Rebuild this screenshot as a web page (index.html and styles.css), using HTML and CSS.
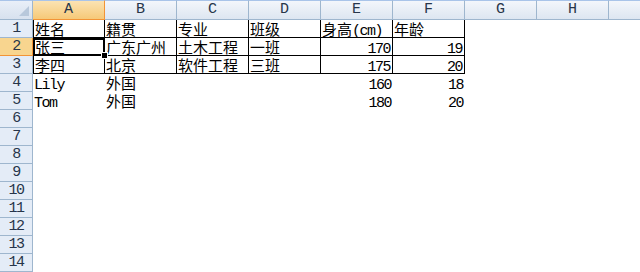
FILE: index.html
```html
<!DOCTYPE html>
<html lang="zh-CN">
  <head>
    <meta charset="UTF-8" />
    <title>Sheet1</title>
    <link rel="stylesheet" href="styles.css">
  </head>
  <body>
    <div class="sheet">
      <div class="corner"></div>
      <div class="colhead sel">A</div>
      <div class="colhead">B</div>
      <div class="colhead">C</div>
      <div class="colhead">D</div>
      <div class="colhead">E</div>
      <div class="colhead">F</div>
      <div class="colhead">G</div>
      <div class="colhead">H</div>
      <div class="colhead rest"></div>

      <div class="rowhead">1</div>
      <div class="cell b first">姓名</div>
      <div class="cell b">籍贯</div>
      <div class="cell b">专业</div>
      <div class="cell b">班级</div>
      <div class="cell b">身高<span class="latin">(cm)</span></div>
      <div class="cell b">年龄</div>
      <div class="cell"></div><div class="cell"></div><div class="cell"></div>

      <div class="rowhead sel">2</div>
      <div class="cell b first active">张三<span class="handle"></span></div>
      <div class="cell b">广东广州</div>
      <div class="cell b">土木工程</div>
      <div class="cell b">一班</div>
      <div class="cell b num"><span class="latin">170</span></div>
      <div class="cell b num"><span class="latin">19</span></div>
      <div class="cell"></div><div class="cell"></div><div class="cell"></div>

      <div class="rowhead">3</div>
      <div class="cell b first">李四</div>
      <div class="cell b">北京</div>
      <div class="cell b">软件工程</div>
      <div class="cell b">三班</div>
      <div class="cell b num"><span class="latin">175</span></div>
      <div class="cell b num"><span class="latin">20</span></div>
      <div class="cell"></div><div class="cell"></div><div class="cell"></div>

      <div class="rowhead">4</div>
      <div class="cell"><span class="latin">Lily</span></div>
      <div class="cell">外国</div>
      <div class="cell"></div>
      <div class="cell"></div>
      <div class="cell num"><span class="latin">160</span></div>
      <div class="cell num"><span class="latin">18</span></div>
      <div class="cell"></div><div class="cell"></div><div class="cell"></div>

      <div class="rowhead">5</div>
      <div class="cell"><span class="latin">Tom</span></div>
      <div class="cell">外国</div>
      <div class="cell"></div>
      <div class="cell"></div>
      <div class="cell num"><span class="latin">180</span></div>
      <div class="cell num"><span class="latin">20</span></div>
      <div class="cell"></div><div class="cell"></div><div class="cell"></div>

      <div class="rowhead">6</div><div class="blank"></div>
      <div class="rowhead">7</div><div class="blank"></div>
      <div class="rowhead">8</div><div class="blank"></div>
      <div class="rowhead">9</div><div class="blank"></div>
      <div class="rowhead">10</div><div class="blank"></div>
      <div class="rowhead">11</div><div class="blank"></div>
      <div class="rowhead">12</div><div class="blank"></div>
      <div class="rowhead">13</div><div class="blank"></div>
      <div class="rowhead">14</div><div class="blank"></div>
    </div>
  </body>
</html>
```

FILE: styles.css
```css
body {
  margin: 0;
  background: #ffffff;
  font-family: "Noto Sans CJK SC", sans-serif;
  overflow: hidden;
}
.sheet {
  display: grid;
  grid-template-columns: 33px repeat(8, 72px) 1fr;
  grid-template-rows: 20px repeat(14, 18px);
  width: 640px;
  height: 272px;
}
.latin {
  font-family: "Liberation Mono", monospace;
  font-size: 15px;
  letter-spacing: -1.5px;
}
.corner {
  background: linear-gradient(#e9eff8, #d7e1ee);
  border-right: 1px solid #9eb6ce;
  border-bottom: 1px solid #9eb6ce;
  border-top: 1px solid #a9c4e9;
  position: relative;
}
.corner::after {
  content: "";
  position: absolute;
  right: 3px;
  bottom: 3px;
  border-left: 10px solid transparent;
  border-bottom: 10px solid #b8c8db;
}
.colhead {
  background: linear-gradient(#f3f6fb, #dde6f1);
  border-top: 1px solid #a9c4e9;
  border-right: 1px solid #9eb6ce;
  border-bottom: 1px solid #9eb6ce;
  font-family: "Liberation Mono", monospace;
  font-size: 15px;
  line-height: 18px;
  color: #27354a;
  text-align: center;
}
.colhead.sel {
  background: linear-gradient(#fbe3b3, #f6c978);
  border-right-color: #f29436;
  border-bottom-color: #f29436;
}
.colhead.rest {
  border-right: none;
}
.rowhead {
  background: #e4ecf7;
  border-right: 1px solid #9eb6ce;
  border-bottom: 1px solid #9eb6ce;
  font-family: "Liberation Mono", monospace;
  font-size: 15px;
  line-height: 17px;
  letter-spacing: -1.5px;
  color: #27354a;
  text-align: center;
}
.rowhead.sel {
  background: #f8d58f;
  border-right-color: #f29436;
  border-bottom-color: #f29436;
}
.cell {
  font-size: 15px;
  line-height: 17px;
  height: 18px;
  color: #000000;
  padding-left: 1px;
  white-space: nowrap;
  position: relative;
  box-sizing: border-box;
  border-bottom: 1px solid transparent;
}
.cell.b {
  border-right: 1px solid #000000;
  border-bottom: 1px solid #000000;
}
.cell.first {
  border-left: 1px solid #000000;
}
.cell.num {
  text-align: right;
  padding-right: 2px;
}
.blank {
  grid-column: 2 / -1;
}
.active {
  outline: 2px solid #000000;
  outline-offset: -2px;
}
.handle {
  position: absolute;
  right: -4px;
  bottom: -4px;
  width: 5px;
  height: 5px;
  background: #000000;
  border: 1px solid #ffffff;
  z-index: 2;
}
```
